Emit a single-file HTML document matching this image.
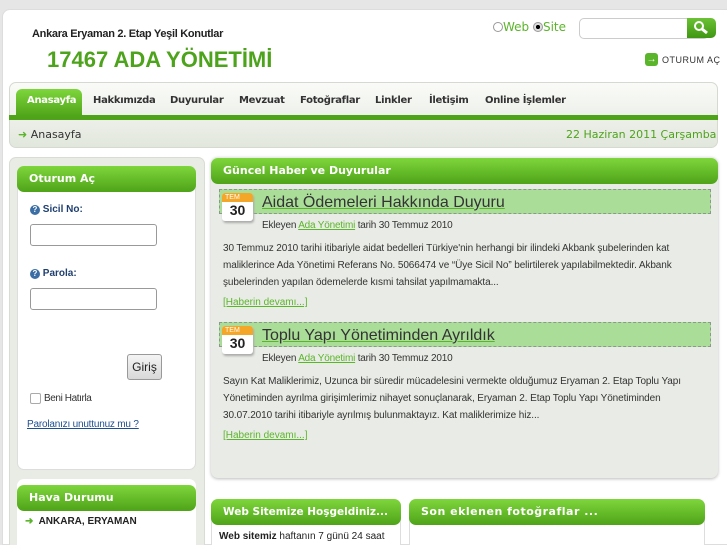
<!DOCTYPE html>
<html><head><meta charset="utf-8"><style>
*{margin:0;padding:0;box-sizing:border-box}
html,body{width:727px;height:545px;overflow:hidden}
body{background:#e6e6e6;font-family:"Liberation Sans",sans-serif;position:relative}
.abs{position:absolute}
.wrap{left:2px;top:9px;width:740px;height:536px;background:#fff;border-radius:8px 8px 0 0;border:1px solid #ddd}
.green{background:linear-gradient(#7ed63c,#4ea318);color:#fff;font-weight:bold;font-size:11px;font-family:"DejaVu Sans",sans-serif;border-radius:7px;padding-left:12px;line-height:26px;white-space:nowrap}
.nav a{position:absolute;top:95px;font-size:10px;font-weight:bold;color:#333;font-family:"DejaVu Sans",sans-serif;letter-spacing:-0.3px}
.cal{width:31px;height:28px;background:#fff;border-radius:3px;box-shadow:1px 2px 2px #aaa}
.cal .t{background:#f4a628;color:#fff;font-size:7px;height:9px;line-height:9px;padding-left:3px;border-radius:3px 3px 0 0}
.cal .d{font-size:14px;font-weight:bold;color:#222;text-align:center;line-height:17px}
.tb{height:25px;background:#aade98;border:1px dashed #8a9a88}
.ttl{font-size:16px;color:#333;text-decoration:underline;text-decoration-color:#5bb52a;white-space:nowrap}
.meta{font-size:10px;color:#333;letter-spacing:-0.2px}
.meta a{color:#5bb52a;text-decoration:underline}
.body{font-size:10px;color:#333;line-height:17px;letter-spacing:-0.1px}
.more{font-size:10px;color:#5bb52a;text-decoration:underline}
.inp{width:127px;height:22px;border:1px solid #999;border-radius:3px;background:#fff}
</style></head><body>
<div class="abs wrap"></div>
<div class="abs" style="left:32px;top:28px;font-size:11px;font-weight:bold;color:#222;letter-spacing:-0.3px">Ankara Eryaman 2. Etap Yeşil Konutlar</div>
<div class="abs" style="left:47px;top:47px;font-size:22px;font-weight:bold;color:#4ea31c">17467 ADA YÖNETİMİ</div>
<div class="abs" style="left:493px;top:20px;font-size:12px;color:#5bb52a;font-family:'DejaVu Sans',sans-serif"><span style="display:inline-block;width:10px;height:10px;border:1px solid #999;border-radius:50%;vertical-align:-1px"></span>Web <span style="display:inline-block;width:10px;height:10px;border:1px solid #999;border-radius:50%;vertical-align:-1px;background:radial-gradient(#000 35%,#ddd 40%)"></span>Site</div>
<div class="abs" style="left:579px;top:18px;width:130px;height:21px;border:1px solid #ccc;border-radius:5px;background:#fff"></div>
<div class="abs" style="left:687px;top:18px;width:29px;height:20px;background:linear-gradient(#6cc235,#3f9612);border-radius:0 5px 5px 0"><svg width="29" height="20"><circle cx="12" cy="8" r="4" stroke="#fff" stroke-width="2" fill="none"/><path d="M15 11l5 4" stroke="#fff" stroke-width="3"/></svg></div>
<div class="abs" style="left:645px;top:53px;width:13px;height:13px;background:#5bb52a;border-radius:3px;color:#fff;font-size:10px;line-height:13px;text-align:center;font-weight:bold">→</div>
<div class="abs" style="left:662px;top:55px;font-size:9px;color:#333;letter-spacing:0.5px">OTURUM AÇ</div>
<div class="abs" style="left:9px;top:82px;width:709px;height:66px;border-radius:7px;background:linear-gradient(#fafbf8,#e2e7dd);border:1px solid #d5d9d0"></div>
<div class="abs" style="left:9px;top:115px;width:709px;height:5px;background:#4ea318"></div>
<div class="abs" style="left:16px;top:89px;width:66px;height:28px;border-radius:6px 6px 0 0;background:linear-gradient(#7ed63c,#4ea318)"></div>
<div class="nav"><a style="left:27px;color:#fff">Anasayfa</a><a style="left:93px">Hakkımızda</a><a style="left:170px">Duyurular</a><a style="left:239px">Mevzuat</a><a style="left:300px">Fotoğraflar</a><a style="left:375px">Linkler</a><a style="left:429px">İletişim</a><a style="left:485px">Online İşlemler</a></div>
<div class="abs" style="left:18px;top:128px;font-size:11px;color:#333;font-family:'DejaVu Sans',sans-serif"><span style="color:#5bb52a">➜</span> Anasayfa</div>
<div class="abs" style="left:566px;top:128px;font-size:11px;color:#4ea31c;font-family:'DejaVu Sans',sans-serif">22 Haziran 2011 Çarşamba</div>
<div class="abs" style="left:9px;top:157px;width:196px;height:400px;background:#e8ece4;border:1px solid #d8dcd4;border-radius:7px"></div>
<div class="abs" style="left:17px;top:166px;width:179px;height:304px;background:#fff;border-radius:7px;border:1px solid #ddd"></div>
<div class="abs green" style="left:17px;top:166px;width:179px">Oturum Aç</div>
<div class="abs" style="left:30px;top:204px;font-size:10px;font-weight:bold;color:#1f3f6f"><span style="display:inline-block;width:10px;height:10px;border-radius:50%;background:#3a6ea5;color:#fff;font-size:8px;text-align:center;line-height:10px">?</span> Sicil No:</div>
<div class="abs inp" style="left:30px;top:224px"></div>
<div class="abs" style="left:30px;top:268px;font-size:10px;font-weight:bold;color:#1f3f6f"><span style="display:inline-block;width:10px;height:10px;border-radius:50%;background:#3a6ea5;color:#fff;font-size:8px;text-align:center;line-height:10px">?</span> Parola:</div>
<div class="abs inp" style="left:30px;top:288px"></div>
<div class="abs" style="left:127px;top:354px;width:35px;height:26px;border:1px solid #999;border-radius:3px;background:linear-gradient(#f4f4f4,#d8d8d8);font-size:12px;text-align:center;line-height:24px;color:#222">Giriş</div>
<div class="abs" style="left:30px;top:393px;width:11px;height:11px;border:1px solid #aaa;border-radius:2px"></div>
<div class="abs" style="left:44px;top:393px;font-size:10px;color:#333;letter-spacing:-0.4px">Beni Hatırla</div>
<div class="abs" style="left:27px;top:419px;font-size:10px;color:#1f4f8f;text-decoration:underline;letter-spacing:-0.2px">Parolanızı unuttunuz mu ?</div>
<div class="abs" style="left:17px;top:479px;width:179px;height:80px;background:#fff;border-radius:7px"></div>
<div class="abs green" style="left:17px;top:485px;width:179px">Hava Durumu</div>
<div class="abs" style="left:25px;top:516px;font-size:10px;font-weight:bold;color:#222"><span style="color:#5bb52a">➜</span>&nbsp; ANKARA, ERYAMAN</div>
<div class="abs" style="left:211px;top:157px;width:507px;height:321px;background:#e9ece6;border-radius:7px;box-shadow:0 1px 3px #bbb"></div>
<div class="abs green" style="left:211px;top:158px;width:507px">Güncel Haber ve Duyurular</div>
<div class="abs tb" style="left:219px;top:189px;width:492px"></div>
<div class="abs cal" style="left:222px;top:193px"><div class="t">TEM</div><div class="d">30</div></div>
<div class="abs ttl" style="left:262px;top:194px">Aidat Ödemeleri Hakkında Duyuru</div>
<div class="abs meta" style="left:262px;top:220px">Ekleyen <a>Ada Yönetimi</a> tarih 30 Temmuz 2010</div>
<div class="abs body" style="left:223px;top:240px;width:480px">30 Temmuz 2010 tarihi itibariyle aidat bedelleri Türkiye'nin herhangi bir ilindeki Akbank şubelerinden kat maliklerince Ada Yönetimi Referans No. 5066474 ve “Üye Sicil No” belirtilerek yapılabilmektedir. Akbank şubelerinden yapılan ödemelerde kısmi tahsilat yapılmamakta...</div>
<div class="abs more" style="left:223px;top:297px">[Haberin devamı...]</div>
<div class="abs tb" style="left:219px;top:322px;width:492px"></div>
<div class="abs cal" style="left:222px;top:326px"><div class="t">TEM</div><div class="d">30</div></div>
<div class="abs ttl" style="left:262px;top:327px">Toplu Yapı Yönetiminden Ayrıldık</div>
<div class="abs meta" style="left:262px;top:353px">Ekleyen <a>Ada Yönetimi</a> tarih 30 Temmuz 2010</div>
<div class="abs body" style="left:223px;top:373px;width:480px">Sayın Kat Maliklerimiz, Uzunca bir süredir mücadelesini vermekte olduğumuz Eryaman 2. Etap Toplu Yapı Yönetiminden ayrılma girişimlerimiz nihayet sonuçlanarak, Eryaman 2. Etap Toplu Yapı Yönetiminden 30.07.2010 tarihi itibariyle ayrılmış bulunmaktayız. Kat maliklerimize hiz...</div>
<div class="abs more" style="left:223px;top:430px">[Haberin devamı...]</div>
<div class="abs" style="left:211px;top:499px;width:190px;height:60px;background:#fff;border:1px solid #ddd;border-radius:7px"></div>
<div class="abs green" style="left:211px;top:499px;width:190px;font-size:10.5px">Web Sitemize Hoşgeldiniz...</div>
<div class="abs" style="left:219px;top:531px;font-size:10px;color:#222"><b>Web sitemiz</b> haftanın 7 günü 24 saat</div>
<div class="abs" style="left:409px;top:499px;width:296px;height:60px;background:#fff;border:1px solid #ddd;border-radius:7px"></div>
<div class="abs green" style="left:409px;top:499px;width:296px;letter-spacing:0.5px">Son eklenen fotoğraflar ...</div>
</body></html>
